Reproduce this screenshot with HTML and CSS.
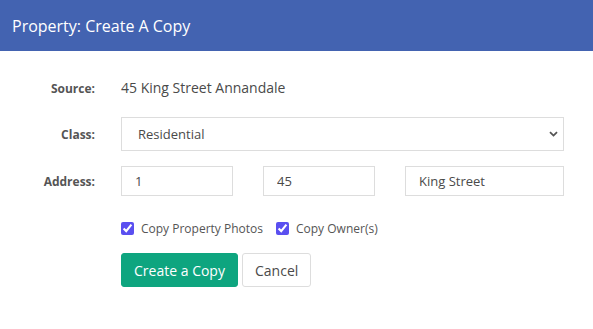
FILE: index.html
```html
<!DOCTYPE html>
<html>
<head>
    <title>Property: Create A Copy</title>
    <link rel="stylesheet" href="styles.css">
</head>
<body>
    <div class="header">
        <h1>Property: Create A Copy</h1>
    </div>

    <div class="copy-form">
        <div class="row row-source">
            <label class="row-label">Source:</label>
            <div class="source-value">45 King Street Annandale</div>
        </div>
        <div class="row row-class">
            <label class="row-label" for="class">Class:</label>
            <div class="select-wrap">
                <select id="class">
                    <option>Residential</option>
                    <option>Commercial</option>
                </select>
                <svg class="chevron" width="9" height="6" viewBox="0 0 9 6">
                    <path d="M1 1.2 L4.5 4.6 L8 1.2" fill="none" stroke="#555" stroke-width="1.8"/>
                </svg>
            </div>
        </div>
        <div class="row row-address">
            <label class="row-label">Address:</label>
            <div class="address-fields">
                <input type="text" class="input-unit" value="1">
                <input type="text" class="input-number" value="45">
                <input type="text" class="input-street" value="King Street">
            </div>
        </div>
        <div class="row row-options">
            <span class="row-label"></span>
            <div class="options">
                <label class="check"><input type="checkbox" checked> Copy Property Photos</label>
                <label class="check"><input type="checkbox" checked> Copy Owner(s)</label>
            </div>
        </div>
        <div class="row row-buttons">
            <span class="row-label"></span>
            <div class="buttons">
                <button class="btn btn-primary">Create a Copy</button>
                <button class="btn btn-default">Cancel</button>
            </div>
        </div>
    </div>
</body>
</html>
```

FILE: styles.css
```css
body {
    font-family: "Open Sans", "Liberation Sans", sans-serif;
    margin: 0;
    background: #fff;
    color: #4a4a4a;
}

.header {
    background-color: #4363b1;
    height: 51px;
    display: flex;
    align-items: center;
    padding: 0 12px;
}

.header h1 {
    margin: 0;
    color: #fff;
    font-size: 16px;
    font-weight: normal;
}

.copy-form {
    padding-top: 25px;
}

.row {
    display: flex;
    align-items: center;
}

.row-label {
    width: 95px;
    margin-right: 26px;
    text-align: right;
    font-size: 12px;
    font-weight: bold;
    color: #555;
    flex-shrink: 0;
}

.source-value {
    font-size: 14px;
    line-height: 24px;
    color: #4a4a4a;
}

.row-class {
    margin-top: 17px;
}

.select-wrap {
    position: relative;
    width: 443px;
}

.select-wrap select {
    width: 100%;
    height: 34px;
    border: 1px solid #ddd;
    border-radius: 0;
    background: #fff;
    padding: 0 16px;
    font-family: inherit;
    font-size: 13px;
    color: #4a4a4a;
    appearance: none;
    -webkit-appearance: none;
}

.chevron {
    position: absolute;
    right: 6px;
    top: 14px;
}

.row-address {
    margin-top: 15px;
}

.address-fields {
    display: flex;
    gap: 30px;
    width: 443px;
}

.address-fields input {
    box-sizing: border-box;
    height: 30px;
    border: 1px solid #ddd;
    padding: 0 13px;
    font-family: inherit;
    font-size: 13px;
    color: #4a4a4a;
}

.input-unit,
.input-number {
    width: 112px;
}

.input-street {
    width: 159px;
}

.row-options {
    margin-top: 22px;
    height: 20px;
}

.options {
    display: flex;
    gap: 13px;
}

.check {
    display: flex;
    align-items: center;
    font-size: 12px;
    color: #555;
}

.check input {
    margin: 0 7px 0 0;
    width: 13px;
    height: 13px;
    accent-color: #5a4ff0;
}

.row-buttons {
    margin-top: 15px;
}

.buttons {
    display: flex;
    gap: 4px;
}

.btn {
    height: 34px;
    font-family: inherit;
    font-size: 14px;
    border-radius: 3px;
    cursor: pointer;
    padding: 0 12px;
}

.btn-primary {
    background-color: #0ea57f;
    color: #fff;
    border: 1px solid #0ea57f;
    width: 117px;
}

.btn-default {
    background: #fff;
    color: #4a4a4a;
    border: 1px solid #ddd;
    width: 69px;
}
```
